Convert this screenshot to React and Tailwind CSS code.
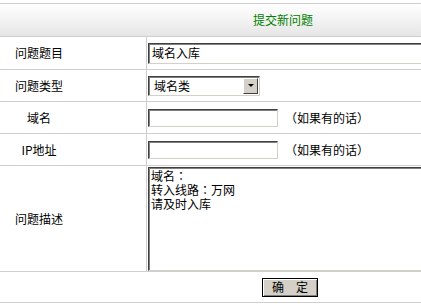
const font = { fontFamily: '"Noto Sans CJK SC", "Liberation Sans", sans-serif' }
const tc = { fontFamily: '"Noto Sans CJK TC", sans-serif' }

const Field = ({ className = '', children }) => (
  <div
    className={`shrink-0 bg-white border border-t-[#404040] border-l-[#404040] border-b-[#d4d0c8] border-r-[#d4d0c8] shadow-[inset_1px_1px_0_#808080] ${className}`}
  >
    {children}
  </div>
)

const Row = ({ label, height, children }) => (
  <div className={`flex border-b border-[#cfcfcf] ${height}`}>
    <div className="w-[147px] shrink-0 border-r border-[#cfcfcf] flex items-center">
      <div className="w-[78px] text-center">{label}</div>
    </div>
    <div className="flex-1 flex items-center pl-[1px]">{children}</div>
  </div>
)

export default function App() {
  return (
    <div className="w-full h-[306px] overflow-hidden bg-white text-[12px] text-black leading-[14px]" style={font}>
      <div className="w-[600px] pt-[3px]">
        <div className="border-t border-b border-[#cfcfcf] h-[34px] bg-gradient-to-b from-white to-[#e6e6e6] flex items-center">
          <div className="w-[566px] text-center text-[#008000]">提交新问题</div>
        </div>

        <Row label="问题题目" height="h-[33px]">
          <Field className="w-[400px] h-[21px] flex items-center pl-[3px]">域名入库</Field>
        </Row>

        <Row label="问题类型" height="h-[32px]">
          <Field className="w-[112px] h-[20px] flex items-center">
            <span className="flex-1 pl-[5px]">域名类</span>
            <span className="w-[15px] h-[16px] mr-[1px] bg-[#d4d0c8] border border-t-white border-l-white border-b-[#404040] border-r-[#404040] flex items-center justify-center">
              <span className="w-0 h-0 border-l-[3px] border-r-[3px] border-t-[3px] border-l-transparent border-r-transparent border-t-black" />
            </span>
          </Field>
        </Row>

        <Row label="域名" height="h-[32px]">
          <Field className="w-[130px] h-[18px]" />
          <span className="ml-[7px]">（如果有的话）</span>
        </Row>

        <Row label="IP地址" height="h-[32px]">
          <Field className="w-[130px] h-[18px]" />
          <span className="ml-[7px]">（如果有的话）</span>
        </Row>

        <div className="flex border-b border-[#cfcfcf] h-[106px]">
          <div className="w-[147px] shrink-0 border-r border-[#cfcfcf] flex items-center">
            <div className="w-[78px] text-center">问题描述</div>
          </div>
          <div className="flex-1 pl-[1px] pt-[1px]">
            <Field className="w-[400px] h-[104px] pl-[2px] pt-[1px]">
              <div className="leading-[14px]">域名<span style={tc}>：</span></div>
              <div className="leading-[14px]">转入线路<span style={tc}>：</span>万网</div>
              <div className="leading-[14px]">请及时入库</div>
            </Field>
          </div>
        </div>

        <div className="border-b border-[#cfcfcf] h-[31px] flex items-center">
          <div className="w-[580px] flex justify-center">
            <button className="w-[56px] h-[19px] bg-[#d4d0c8] border border-black shadow-[inset_1px_1px_0_#ffffff,inset_-1px_-1px_0_#808080] flex items-center justify-center gap-[12px]">
              <span>确</span>
              <span>定</span>
            </button>
          </div>
        </div>
      </div>
    </div>
  )
}
